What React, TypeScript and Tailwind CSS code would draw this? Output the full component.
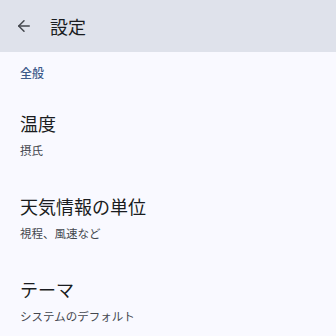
import { ArrowLeft } from "lucide-react";

const items = [
  { title: "温度", sub: "摂氏" },
  { title: "天気情報の単位", sub: "視程、風速など" },
  { title: "テーマ", sub: "システムのデフォルト" },
];

export default function App() {
  return (
    <div
      className="w-[336px] h-[336px] overflow-hidden bg-[#f9f9ff]"
      style={{ fontFamily: '"Noto Sans CJK JP", "Noto Sans", sans-serif' }}
    >
      <header className="h-[52px] bg-[#dfe2eb] flex items-center">
        <div className="w-[46px] flex justify-center pl-[2px]">
          <ArrowLeft size={18} strokeWidth={2} className="text-[#44474e]" />
        </div>
        <h1 className="text-[18px] text-[#1a1c20] pl-[4px]">設定</h1>
      </header>

      <div className="px-5">
        <div className="text-[12px] text-[#3d5a8a] font-medium pt-[12px] h-[42px] leading-[18px]">
          全般
        </div>
        {items.map((it) => (
          <div key={it.title} className="h-[83px] pt-[17px]">
            <div className="text-[18px] leading-[24px] text-[#1a1c20]">{it.title}</div>
            <div className="text-[11.5px] leading-[16px] mt-[7px] text-[#44474e]">{it.sub}</div>
          </div>
        ))}
      </div>
    </div>
  );
}
